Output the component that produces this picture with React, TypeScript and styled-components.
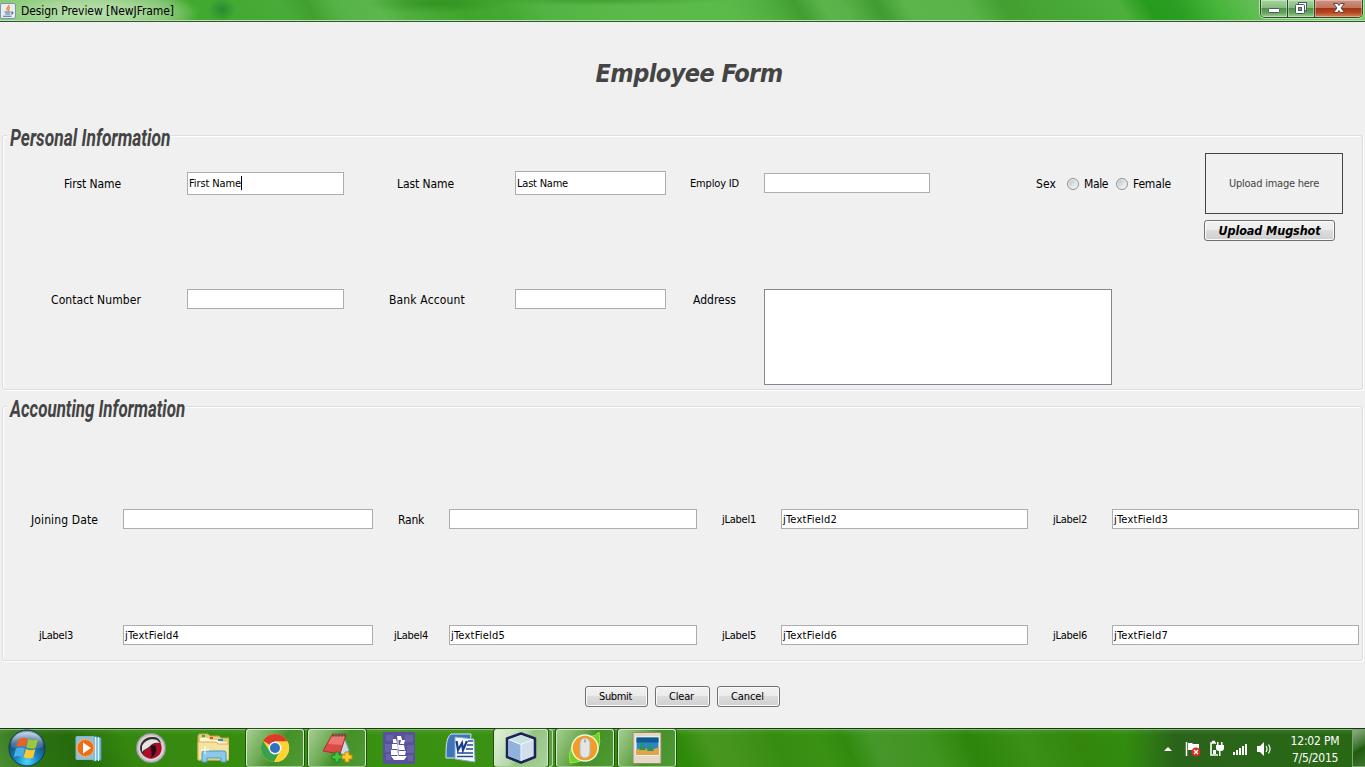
import React, { useLayoutEffect, useRef, useState } from "react";
import styled, { createGlobalStyle, css } from "styled-components";

const Global = createGlobalStyle`
  * { box-sizing: border-box; }
  html, body { margin: 0; padding: 0; overflow: hidden; background: #f0f0f0; }
  body { font-family: "DejaVu Sans Condensed", "DejaVu Sans", sans-serif; font-stretch: condensed; font-size: 11px; color: #000; }
`;

/* Text set to a known advance width by spreading the difference over its letters. */
const Run = styled.span`
  display: inline-block;
  white-space: pre;
  flex: none;
`;
function Fit({ width, children }: { width: number; children: string }) {
  const ref = useRef<HTMLSpanElement>(null);
  const [spacing, setSpacing] = useState(0);
  useLayoutEffect(() => {
    if (ref.current) {
      const natural = ref.current.getBoundingClientRect().width;
      setSpacing((width - natural) / children.length);
    }
  }, []);
  return <Run ref={ref} style={{ letterSpacing: `${spacing}px` }}>{children}</Run>;
}

const Screen = styled.div`
  width: 1365px;
  height: 767px;
  display: flex;
  flex-direction: column;
  overflow: hidden;
`;

const TitleBar = styled.header`
  height: 22px;
  flex: none;
  display: flex;
  align-items: flex-start;
  border-bottom: 1px solid #2b5927;
  box-shadow: inset 0 -1px 0 #b9dfb2;
  background:
    radial-gradient(ellipse 110px 24px at 90px 12px, rgba(190, 226, 178, .95) 0, rgba(175, 218, 162, .85) 45%, rgba(150, 208, 135, .6) 75%, transparent 100%),
    radial-gradient(ellipse 14px 12px at 222px 10px, rgba(20, 120, 45, .6), transparent),
    radial-gradient(ellipse 70px 11px at 435px 3px, rgba(45, 140, 28, .75), transparent),
    radial-gradient(ellipse 130px 6px at 600px 0, rgba(45, 135, 30, .5), transparent),
    linear-gradient(60deg, #8cca7a 0, #6fbb5c 12%, #42a92f 14.5%, #43a932 17%, #48ac38 21%, #42a030 23%, #55b346 25%, #5cb74c 28%, #4fae3d 30%, #40a52d 34%, #43a932 37%, #52b442 40%, #5aba49 46%, #5bbb4a 53%, #52b042 56%, #429e31 58.500%, #5bb54b 60.500%, #58b249 62%, #419c30 64.300%, #5bb54a 66.500%, #59b348 71%, #429f30 73.500%, #46a534 76%, #4daf3c 82%, #269b1e 84%, #2a9e22 86%, #46b53b 89%, #6ac05c 92.500%, #82cb75 100%);
`;
const TitleText = styled.div`
  display: flex;
  font-size: 12px;
  line-height: 16px;
  padding: 3px 0 0 5px;
  flex: 1;
`;
const AppIcon = styled.svg`
  width: 16px;
  height: 16px;
  flex: none;
  margin-top: 3px;
`;
const Controls = styled.div`
  display: flex;
  width: 103px;
  height: 18px;
  margin-right: 2px;
  border: 1px solid #2e4a2c;
  border-top: 0;
  border-radius: 0 0 5px 5px;
  overflow: hidden;
  box-shadow: 0 0 0 1px rgba(220, 245, 215, .65);
`;
const Control = styled.button<{ $close?: boolean }>`
  width: ${(p) => (p.$close ? 47 : 27)}px;
  height: 17px;
  border: 0;
  border-right: ${(p) => (p.$close ? 0 : "1px solid #2e4a2c")};
  padding: 0;
  display: flex;
  justify-content: center;
  box-shadow: inset 0 0 0 1px rgba(255, 255, 255, .35);
  background: ${(p) =>
    p.$close
      ? "radial-gradient(ellipse 24px 8px at 50% 100%, rgba(225, 100, 35, .6), transparent), linear-gradient(#cf9280 0, #bf7560 45%, #a03313 48%, #b04524 75%, #cf8a68 100%)"
      : "linear-gradient(#a8d59f 0, #86bc7d 45%, #4f9348 48%, #66a35c 75%, #a0d096 100%)"};
`;

const Form = styled.main`
  height: 706px;
  flex: none;
  display: flex;
  flex-direction: column;
  background: #f0f0f0;
`;
const Title = styled.h1`
  margin: 0;
  height: 113px;
  display: flex;
  justify-content: center;
  padding: 36px 0 0 13px;
  font-size: 25px;
  line-height: 32px;
  font-weight: bold;
  font-style: italic;
  color: #444;
`;
const Panel = styled.section<{ $h: number; $gap?: number }>`
  height: ${(p) => p.$h}px;
  flex: none;
  margin: 0 2px ${(p) => p.$gap ?? 0}px 2px;
  border: 1px solid #d5dfe5;
  border-radius: 3px;
  box-shadow: inset 1px 1px 0 #fff, 1px 1px 0 #fff;
  display: flex;
  flex-direction: column;
`;
const Legend = styled.h2<{ $w: number }>`
  margin: -13px 0 0 4px;
  padding: 0 0 0 3px;
  height: 30px;
  width: ${(p) => p.$w}px;
  background: #f0f0f0;
  white-space: nowrap;
  font: italic bold 24px/30px "Liberation Sans Narrow", "Roboto", sans-serif;
  color: #444;
`;
const Squeezed = styled.span<{ $s: number }>`
  display: inline-block;
  transform-origin: 0 50%;
  transform: scaleX(${(p) => p.$s});
`;
const Columns = styled.div`
  display: flex;
  justify-content: space-between;
`;
const Row = styled.div<{ $mt: number; $top?: boolean }>`
  display: flex;
  height: 24px;
  align-items: ${(p) => (p.$top ? "flex-start" : "center")};
  margin-top: ${(p) => p.$mt}px;
`;
const LabelBox = styled.label<{ $cell: number; $pad: number; $small?: boolean }>`
  display: flex;
  flex: none;
  width: ${(p) => p.$cell}px;
  padding-left: ${(p) => p.$pad}px;
  padding-top: 2px;
  font-size: ${(p) => (p.$small ? 11 : 12)}px;
  line-height: 20px;

  ${Row}:has(> div:last-child:empty) > & {
    padding-top: 1px;
  }
`;
const Field = styled.div<{ $w: number; $h?: number }>`
  flex: none;
  width: ${(p) => p.$w}px;
  height: ${(p) => p.$h ?? 20}px;
  display: flex;
  align-items: center;
  padding-left: 1px;
  border: 1px solid #abadb3;
  background: #fff;
  font-size: 11px;
  line-height: 14px;

  ${Run} {
    padding-top: 1px;
  }
`;
const Area = styled(Field)`
  border-color: #828790;
`;
const Caret = styled.i`
  width: 1px;
  height: 14px;
  background: #000;
`;
const Radio = styled.span<{ $ml: number }>`
  width: 12px;
  height: 12px;
  flex: none;
  margin-left: ${(p) => p.$ml}px;
  margin-right: 5px;
  margin-top: -1px;
  border: 1px solid #8e8f8f;
  border-radius: 50%;
  box-shadow: inset 0 0 0 1px #f4f4f4;
  background: linear-gradient(135deg, #b4bac0, #e4e7ea 60%, #f4f5f6);
`;
const Choice = styled.div`
  display: flex;
  align-items: center;
  font-size: 12px;
  line-height: 20px;
  padding-top: 2px;
`;
const Upload = styled.div`
  width: 139px;
  margin-right: 19px;
  display: flex;
  flex-direction: column;
  align-items: flex-start;
  gap: 6px;
`;
const Photo = styled.div`
  width: 138px;
  height: 61px;
  margin-left: 1px;
  border: 1px solid #444;
  display: flex;
  align-items: center;
  justify-content: center;
  color: #444;
`;
const Button = styled.button<{ $w: number; $strong?: boolean }>`
  width: ${(p) => p.$w}px;
  height: 21px;
  flex: none;
  padding: 0;
  display: flex;
  align-items: center;
  justify-content: center;
  border: 1px solid #707070;
  border-radius: 3px;
  box-shadow: inset 0 0 0 1px #fbfbfb;
  background: linear-gradient(#f2f2f2 0, #ebebeb 48%, #dddddd 50%, #cfcfcf 100%);
  font-family: inherit;
  font-stretch: inherit;
  font-size: 11px;
  line-height: 14px;
  color: #000;
  padding-right: 2px;
  ${(p) => p.$strong && css`font-size: 12.5px; font-weight: bold; font-style: italic; padding-right: 0;`}
`;
const Actions = styled.div`
  display: flex;
  gap: 7px;
  padding-left: 585px;
  margin-top: 25px;
`;

const Taskbar = styled.footer`
  height: 39px;
  flex: none;
  display: flex;
  border-top: 1px solid #173813;
  box-shadow: inset 0 1px 0 #86bd72;
  background:
    linear-gradient(to bottom, rgba(255, 255, 255, .1), transparent 6px),
    linear-gradient(to right, transparent 1125px, rgba(40, 84, 30, .75) 1175px, rgba(38, 90, 24, .7) 1340px, rgba(30, 80, 20, .6)),
    linear-gradient(66deg, #4b8f35 0, #2c7212 3%, #266a0d 6%, #35880f 10%, #38900f 22%, #3b9114 42%, #2f8509 48%, #2f8a0a 50%, #47961e 52%, #45951f 53.500%, #368c10 57%, #3a9114 60%, #328b0e 62%, #45972a 64%, #409420 68%, #2e850b 71%, #3b9018 75%, #32860c 79%, #329010 84%, #2f8a0d 100%);
`;
const Slot = styled.div<{ $first?: boolean }>`
  width: ${(p) => (p.$first ? 58 : 62)}px;
  flex: none;
  display: flex;
  justify-content: center;
  align-items: center;
  ${(p) => p.$first && css`padding-right: 4px;`}
`;
const TaskButton = styled.div<{ $active?: boolean }>`
  width: ${(p) => (p.$active ? 54 : 58)}px;
  height: 38px;
  flex: none;
  display: flex;
  align-items: center;
  justify-content: center;
  border: 1px solid #d0e8c6;
  border-bottom-color: #9ccc89;
  border-radius: 3px;
  box-shadow: 0 0 0 1px #22540f;
  background: ${(p) =>
    p.$active
      ? "linear-gradient(120deg, #e2f0dc 0, #b7d8aa 45%, #94c382 55%, #a9d29a 100%)"
      : "linear-gradient(120deg, #a5cd91 0, #6eab54 35%, #46902a 55%, #509a34 100%)"};
`;
const Stack = styled.i`
  width: 4px;
  height: 38px;
  margin-left: 1px;
  border: solid #b9dba9;
  border-width: 1px 1px 1px 0;
  border-radius: 0 3px 3px 0;
  background: #5f9b49;
`;
const Icon = styled.svg<{ $s?: number }>`
  width: ${(p) => p.$s ?? 32}px;
  height: ${(p) => p.$s ?? 32}px;
  flex: none;
`;
const Tray = styled.div`
  margin-left: auto;
  display: flex;
  align-items: center;
`;
const TrayIcons = styled.svg`
  width: 112px;
  height: 20px;
  margin-top: 1px;
`;
const Clock = styled.div`
  width: 76px;
  display: flex;
  flex-direction: column;
  align-items: center;
  color: #fff;
  font-size: 12px;
  line-height: 17px;
  padding: 3px 0 0 2px;
`;
const ShowDesktop = styled.div`
  width: 13px;
  height: 38px;
  border: 1px solid #7ca471;
  border-right: 0;
  background: linear-gradient(150deg, #8eae82, #3d7430 45%, #215a10 55%, #3a7629);
`;

function Label({ cell, pad, w, small, children }: { cell: number; pad: number; w: number; small?: boolean; children: string }) {
  return <LabelBox $cell={cell} $pad={pad} $small={small}><Fit width={w}>{children}</Fit></LabelBox>;
}

const JavaIcon = () => (
  <AppIcon viewBox="0 0 16 16">
    <rect x=".5" y=".5" width="15" height="15" rx="1.5" fill="#e8edf2" stroke="#8093a8" />
    <path d="M8.8 2c1 1.5-3.4 2.8-1.5 5.5M10 4.3C7.5 5.4 10 6 8.3 7.8" fill="none" stroke="#ee7722" strokeWidth="1.2" />
    <path d="M4.5 9h6M5.3 11h4.6M3 13.2h8.5M11 9.2c3-.7 2 1.8-.2 2" fill="none" stroke="#426b91" strokeWidth="1.1" />
  </AppIcon>
);

const StartOrb = () => (
  <Icon $s={38} viewBox="0 0 38 38">
    <defs>
      <radialGradient id="orb" cx="50%" cy="88%" r="80%"><stop offset="0" stopColor="#4bd8ff" /><stop offset=".4" stopColor="#1682bd" /><stop offset=".8" stopColor="#174b79" /><stop offset="1" stopColor="#7396b0" /></radialGradient>
      <linearGradient id="shine" x2="0" y2="1"><stop stopColor="#d5e3ed" stopOpacity=".85" /><stop offset="1" stopColor="#86a9c0" stopOpacity=".2" /></linearGradient>
    </defs>
    <circle cx="19" cy="19" r="18" fill="url(#orb)" stroke="#163953" />
    <path d="M3 18C3 8 10 3 19 3s16 5 16 15c-8 3-24 3-32 0z" fill="url(#shine)" />
    <path d="M10.500 10.500q4.500-3 9-1l-2.300 8.500q-4-2-8.700 0z" fill="#e96225" />
    <path d="M20.500 10q4.500 2.500 9.500.3l-2.300 8.500q-5 2-9.500-.5z" fill="#9bc83b" />
    <path d="M8 19.500q4.500-2 9-.2l-2.300 8.700q-4-2-9 0z" fill="#4aafe5" />
    <path d="M17.900 20q4.500 2 9.500.3l-2.300 8.500q-4.500 1.500-9.500-.5z" fill="#fcc832" />
  </Icon>
);
const MediaIcon = () => (
  <Icon viewBox="0 0 32 32">
    <path d="M20 4l8 2v22l-8 1z" fill="#89c5df" stroke="#4c8dae" />
    <path d="M22.500 5v24M25.500 5v24" stroke="#dff3fb" />
    <rect x="3" y="4.500" width="18" height="23" rx="1" fill="#93bfd0" stroke="#7eb6cc" />
    <circle cx="12.500" cy="16" r="8.500" fill="#ee6c16" stroke="#ffb066" /><path d="M10 10.500l8 5.500-8 5.500z" fill="#fff" />
  </Icon>
);
const DragonIcon = () => (
  <Icon viewBox="0 0 32 32">
    <circle cx="16" cy="16" r="14.700" fill="#bfc1c2" stroke="#888" /><circle cx="16" cy="16" r="12.500" fill="#d8d8d8" />
    <circle cx="16" cy="16" r="10.700" fill="#a80f27" />
    <path d="M6 20C3 11 10 5 19 5q5 0 7 6c-6-1-8 1-10 3-4 3-7 3-8 8z" fill="#303030" />
    <path d="M7 14c3-6 9-8 15-6l3 3c-6-1-8 1-10 3-3 3-6 3-8 6z" fill="#e4e4e4" />
    <path d="M16 14c-1 5 2 6 0 12 6-4 6-8 4-13z" fill="#270c10" />
  </Icon>
);
const FolderIcon = () => (
  <Icon viewBox="0 0 32 32">
    <path d="M2 2h9l2 2h9l2 2h8v22H1V4z" fill="#e8cc7d" stroke="#c3a050" />
    <path d="M3 6h8l2 2h9l2 2h6v4H3z" fill="#fff4cb" /><path d="M5 3h3v2H5z" fill="#1eb44b" /><path d="M13 5h3v2h-3z" fill="#d94b32" /><path d="M21 7h5v2h-5z" fill="#278ddc" />
    <path d="M1 10h18l2 2h11v16H1z" fill="#f5e39f" stroke="#d0b463" />
    <path d="M5 30v-9q0-2 2-2h20q2 0 2 2v9h-5v-4H10v4z" fill="#8cc9e8" stroke="#4c9ac0" />
    <path d="M8 14v8M4 18h8" stroke="#fff" />
  </Icon>
);
const ChromeIcon = () => (
  <Icon viewBox="0 0 32 32">
    <circle cx="16" cy="16" r="14" fill="#fcd433" />
    <path d="M16 16L4 8.800A14 14 0 0 1 28.500 9.500H16z" fill="#dc3b2b" />
    <path d="M4 8.800A14 14 0 0 0 15 30l6-11-5-3-6 2z" fill="#37a249" />
    <path d="M16 9.500h12.500A14 14 0 0 1 15 30l7-11z" fill="#fcd433" />
    <circle cx="16" cy="16" r="6.500" fill="#f4f7fa" /><circle cx="16" cy="16" r="5" fill="#2e74bd" />
  </Icon>
);
const NotepadIcon = () => (
  <Icon viewBox="0 0 32 32">
    <path d="M22 3l6 15-3 5-8-2z" fill="#c8dce7" stroke="#7e9bad" />
    <path d="M11 3h14l-6 19L2 19z" fill="#dd4b47" stroke="#ab302f" /><path d="M11 4h13l-3 9-14-1z" fill="#ee7670" />
    <path d="M12 1v4M15 1v4M18 1v4M21 1v4M24 1v4" stroke="#4a4a4a" />
    <path d="M14 20h4v3h3v4h-3v3h-4v-3h-3v-4h3z" fill="#45c442" stroke="#178a21" />
    <path d="M24 20h4v3h3v4h-3v3h-4v-3h-3v-4h3z" fill="#ffcd2a" stroke="#cc8511" />
  </Icon>
);
const ShipIcon = () => (
  <Icon viewBox="0 0 32 32">
    <rect width="32" height="32" fill="#58519b" />
    <path d="M3 3h7v6H3zM22 3h8v7h-8zM2 12h7v8H2zM24 13h7v8h-7zM3 22h5v6H3zM25 23h5v6h-5z" fill="#6862a6" />
    <path d="M14 4h4l1 4h-4zM10 7h3l1 4h-4zM18 8h4l-1 4h-4zM9 12h5l1 5H9zM15 13h6l1 5h-6zM8 18h6l1 5H8zM16 19h7l-1 4h-6z" fill="#fff" />
    <path d="M8 24h16l-3 4H11z" fill="#fff" /><path d="M15 4v22" stroke="#fff" />
  </Icon>
);
const WordIcon = () => (
  <Icon viewBox="0 0 32 32">
    <path d="M6 2h20L24 26H1C1 15 1 6 6 2z" fill="#3f74b9" stroke="#d5e6fa" />
    <path d="M10 5l19 2 1 23-20-3z" fill="#f8fbff" stroke="#8ca9cf" />
    <path d="M11.500 9l1.500 9 4-7 1 7 4-9" fill="none" stroke="#173f8d" strokeWidth="2.200" />
    <path d="M23 9h5M22 13h6M21 17h7M12 21h16M12 24.500h16" stroke="#234b92" strokeWidth="1.600" />
  </Icon>
);
const CubeIcon = () => (
  <Icon viewBox="0 0 32 32">
    <path d="M16 1.500L30 6.500V25L16 30.500 2 25V6.500z" fill="#c4d9f1" stroke="#1b2452" strokeWidth="2.500" strokeLinejoin="round" />
    <path d="M16 3l12 4.500-12 5L4 7.500z" fill="#c8e3df" /><path d="M4 8l12 5v16L4 24z" fill="#8fb2df" /><path d="M16 13l12-5v16l-12 5z" fill="#d3dded" />
    <path d="M4 7.500l12 5 12-5M16 13v16" fill="none" stroke="#f3faff" />
  </Icon>
);
const MouseIcon = () => (
  <Icon viewBox="0 0 32 32">
    <path d="M20 5Q27 4 30 0q2 10-1 18zM3 14Q-1 22 1 31q9-1 13-3z" fill="#76ce27" stroke="#9ce943" />
    <circle cx="16" cy="16" r="13" fill="#f39b22" stroke="#e8f8d9" strokeWidth="1.500" />
    <rect x="11" y="6" width="10" height="20" rx="5" fill="#e4e4e4" stroke="#b5b5b5" /><path d="M16 7.500v3" stroke="#888" strokeWidth="1.200" />
  </Icon>
);
const PictureIcon = () => (
  <Icon viewBox="0 0 32 32">
    <rect x="2" y=".5" width="28" height="31" rx="1" fill="#e3d9c5" stroke="#978970" />
    <path d="M5 5h23v18H5z" fill="#2b86c2" stroke="#fff" /><path d="M5.500 5.500h22v5h-22z" fill="#0e5c93" />
    <path d="M5 18q9-5 13 1l10-4v8H5z" fill="#dfa54a" /><path d="M11 9l4 9H8zM19 12l4 7h-7z" fill="#29945c" />
  </Icon>
);

export default function App() {
  return (
    <Screen>
      <Global />
      <TitleBar>
        <JavaIcon />
        <TitleText><Fit width={153}>Design Preview [NewJFrame]</Fit></TitleText>
        <Controls>
          <Control aria-label="Minimize"><svg width="14" height="16"><rect x="1.500" y="8.500" width="11" height="4" rx="1" fill="#fff" stroke="#4c5866" /></svg></Control>
          <Control aria-label="Restore"><svg width="14" height="16"><rect x="4.500" y="2.500" width="8" height="8" fill="#fff" stroke="#4c5866" /><rect x="1.500" y="4.500" width="9" height="9" rx="1" fill="#fff" stroke="#4c5866" /><rect x="4.500" y="7.500" width="3" height="3" fill="#75a76d" stroke="#4c5866" /></svg></Control>
          <Control $close aria-label="Close"><svg width="14" height="16"><path d="M1.500 3.500h4L7 5.500l1.500-2h4L9 8l3.500 4.500h-4L7 10.500l-1.500 2h-4L5 8z" fill="#fff" stroke="#59434c" /></svg></Control>
        </Controls>
      </TitleBar>

      <Form>
        <Title><Fit width={187}>Employee Form</Fit></Title>

        <Panel $h={255} $gap={16}>
          <Legend $w={164}><Squeezed $s={0.725}>Personal Information</Squeezed></Legend>
          <Columns>
            <div>
              <Row $mt={18}>
                <Label cell={184} pad={61} w={57}>First Name</Label>
                <Field $w={157} $h={23}><Fit width={52}>First Name</Fit><Caret /></Field>
                <Label cell={171} pad={53} w={57}>Last Name</Label>
                <Field $w={151} $h={24}><Fit width={51}>Last Name</Fit></Field>
                <Label cell={98} pad={24} w={49} small>Employ ID</Label>
                <Field $w={166} />
                <Label cell={126} pad={106} w={20}>Sex</Label>
                <Choice>
                  <Radio $ml={11} /><Fit width={24}>Male</Fit>
                  <Radio $ml={8} /><Fit width={38}>Female</Fit>
                </Choice>
              </Row>
              <Row $mt={94} $top>
                <Label cell={184} pad={48} w={90}>Contact Number</Label>
                <Field $w={157} />
                <Label cell={171} pad={45} w={76}>Bank Account</Label>
                <Field $w={151} />
                <Label cell={98} pad={27} w={43}>Address</Label>
                <Area $w={348} $h={96} />
              </Row>
            </div>
            <Upload>
              <Photo><Fit width={90}>Upload image here</Fit></Photo>
              <Button $w={131} $strong><Fit width={102}>Upload Mugshot</Fit></Button>
            </Upload>
          </Columns>
        </Panel>

        <Panel $h={255}>
          <Legend $w={179}><Squeezed $s={0.706}>Accounting Information</Squeezed></Legend>
          <Row $mt={83}>
            <Label cell={120} pad={28} w={67}>Joining Date</Label>
            <Field $w={250} />
            <Label cell={76} pad={25} w={26}>Rank</Label>
            <Field $w={248} />
            <Label cell={84} pad={25} w={34} small>jLabel1</Label>
            <Field $w={247}><Fit width={54}>jTextField2</Fit></Field>
            <Label cell={84} pad={25} w={34} small>jLabel2</Label>
            <Field $w={247}><Fit width={54}>jTextField3</Fit></Field>
          </Row>
          <Row $mt={92}>
            <Label cell={120} pad={36} w={34} small>jLabel3</Label>
            <Field $w={250}><Fit width={54}>jTextField4</Fit></Field>
            <Label cell={76} pad={21} w={34} small>jLabel4</Label>
            <Field $w={248}><Fit width={54}>jTextField5</Fit></Field>
            <Label cell={84} pad={25} w={34} small>jLabel5</Label>
            <Field $w={247}><Fit width={54}>jTextField6</Fit></Field>
            <Label cell={84} pad={25} w={34} small>jLabel6</Label>
            <Field $w={247}><Fit width={54}>jTextField7</Fit></Field>
          </Row>
        </Panel>

        <Actions>
          <Button $w={63}><Fit width={33}>Submit</Fit></Button>
          <Button $w={55}><Fit width={25}>Clear</Fit></Button>
          <Button $w={63}><Fit width={33}>Cancel</Fit></Button>
        </Actions>
      </Form>

      <Taskbar>
        <Slot $first><StartOrb /></Slot>
        <Slot><MediaIcon /></Slot>
        <Slot><DragonIcon /></Slot>
        <Slot><FolderIcon /></Slot>
        <Slot><TaskButton><ChromeIcon /></TaskButton></Slot>
        <Slot><TaskButton><NotepadIcon /></TaskButton></Slot>
        <Slot><ShipIcon /></Slot>
        <Slot><WordIcon /></Slot>
        <Slot><TaskButton $active><CubeIcon /></TaskButton><Stack /></Slot>
        <Slot><TaskButton><MouseIcon /></TaskButton></Slot>
        <Slot><TaskButton><PictureIcon /></TaskButton></Slot>
        <Tray>
          <TrayIcons viewBox="0 0 112 20">
            <path d="M0 12l4-4 4 4z" fill="#fff" />
            <path d="M22.500 3v14" stroke="#fff" strokeWidth="1.500" /><path d="M24 4h4l1 1h6v7h-6l-1-1h-4z" fill="#fff" />
            <circle cx="32" cy="13" r="4.500" fill="#d92920" /><path d="M30 11l4 4M34 11l-4 4" stroke="#fff" strokeWidth="1.400" />
            <path d="M52 4h-5v12h7M48 2.500h3" fill="none" stroke="#fff" strokeWidth="1.600" />
            <path d="M49 11h3v4h-3zM52 6h8v3q0 3-3 3h-2q-3 0-3-3zM53 3h1.500v3H53zM57 3h1.500v3H57zM55 12h1.500v5H55z" fill="#fff" />
            <path d="M69 13h2v3h-2zM72 11h2v5h-2zM75 9h2v7h-2zM78 7h2v9h-2zM81 5h2v11h-2z" fill="#fff" />
            <path d="M93 7h3l4-4v14l-4-4h-3z" fill="#fff" /><path d="M102 7q2 3 0 6M104.500 5.500q3 4.500 0 9" fill="none" stroke="#fff" strokeWidth="1.200" />
          </TrayIcons>
          <Clock><Fit width={49}>12:02 PM</Fit><Fit width={46}>7/5/2015</Fit></Clock>
          <ShowDesktop />
        </Tray>
      </Taskbar>
    </Screen>
  );
}
